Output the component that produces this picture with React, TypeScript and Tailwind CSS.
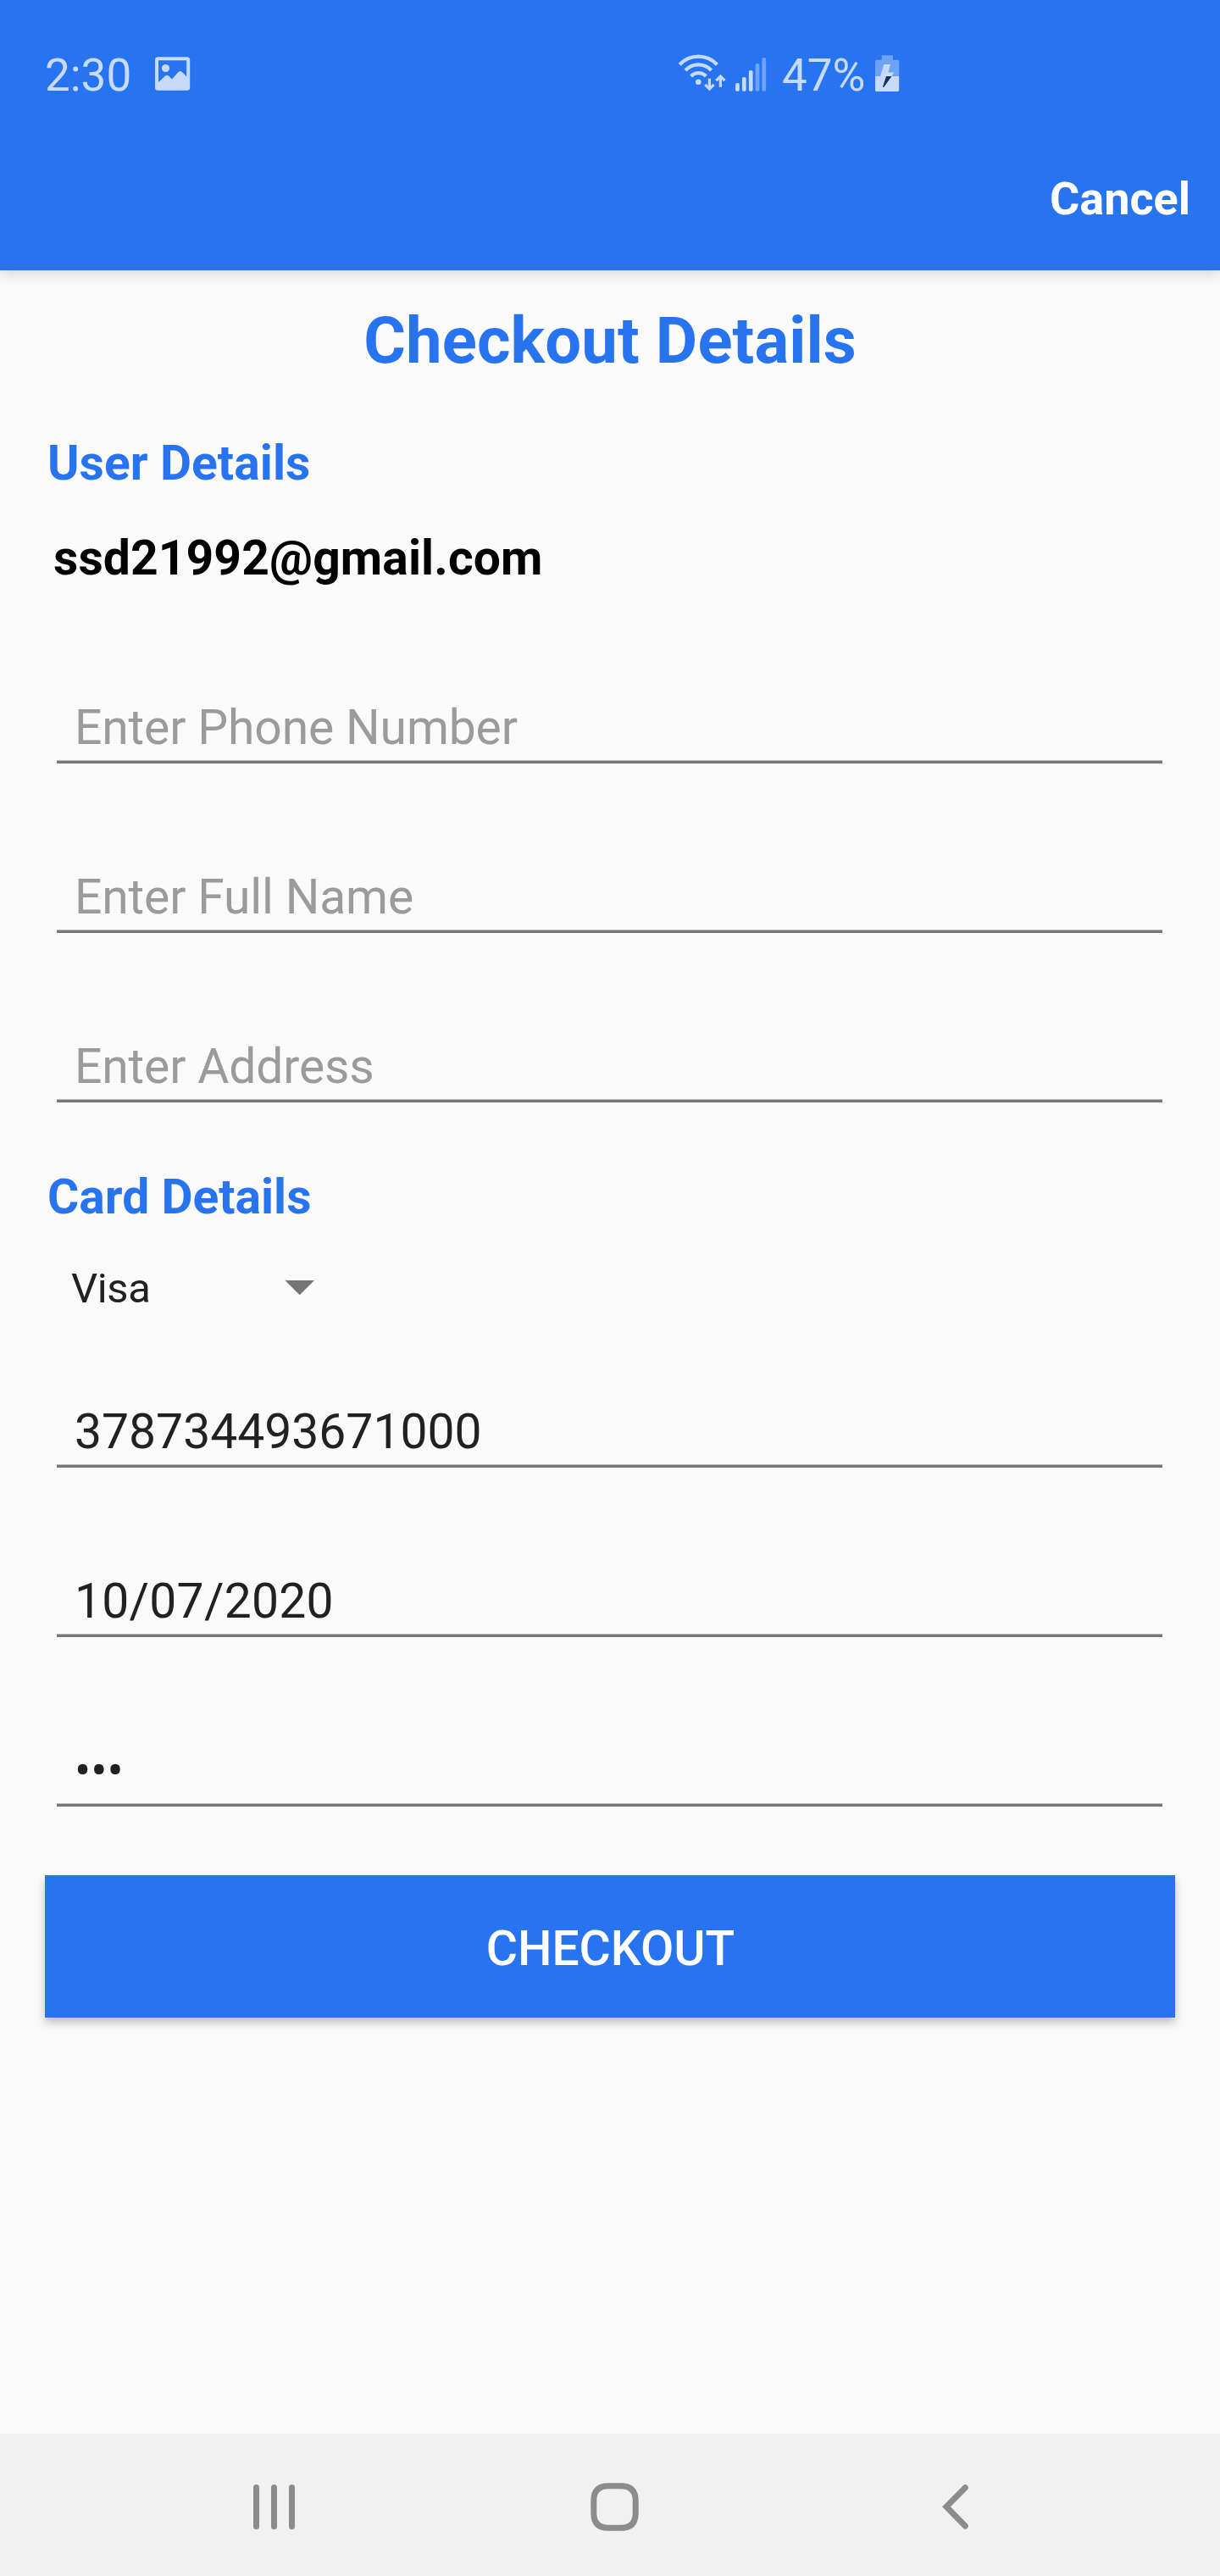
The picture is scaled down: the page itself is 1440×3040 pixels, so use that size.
import React from "react";

function PictureIcon() {
  return (
    <svg className="h-[60px] w-[42px]" viewBox="183 57 42 60" fill="none">
      <rect x="185" y="69.2" width="37.2" height="35.6" rx="1.5" stroke="#c6dbfc" strokeWidth="4" />
      <circle cx="195.5" cy="80.5" r="4.6" fill="#c6dbfc" />
      <path d="M186 98L194.5 90Q197 87.500 199.500 90L203 93.500L210 85.500Q212.500 82.500 215.500 85.500L221.500 91.500V105H186Z" fill="#c6dbfc" />
    </svg>
  );
}

function WifiIcon() {
  return (
    <svg className="h-[60px] w-[64px]" viewBox="0 0 64 60" fill="none" stroke="#c6dbfc">
      <path d="M7.200 21.200A30.200 30.200 0 0 1 51.400 21.200" strokeWidth="4.200" />
      <path d="M14 28A21 21 0 0 1 44.600 28" strokeWidth="4.200" />
      <path d="M20.700 35A11.800 11.800 0 0 1 38.300 35" strokeWidth="4.200" />
      <circle cx="29.300" cy="41.800" r="3.300" fill="#c6dbfc" stroke="none" />
      <path d="M42.400 37.800V49.500M37.300 44.800L42.400 50L47.500 44.800M55.400 47.800V36M50.300 40.200L55.400 35L60.500 40.200" strokeWidth="3.200" />
    </svg>
  );
}

function SignalIcon() {
  const bars = [
    { x: 75.4, top: 43, color: "#c6dbfc" },
    { x: 83.3, top: 36, color: "#c6dbfc" },
    { x: 91.2, top: 28, color: "#c6dbfc" },
    { x: 99, top: 20, color: "#6ea2f6" },
    { x: 106.8, top: 13, color: "#6ea2f6" },
  ];
  return (
    <svg className="h-[60px] w-[40px]" viewBox="72 0 40 60">
      {bars.map((b) => (
        <rect key={b.x} x={b.x - 2.35} y={b.top} width={4.7} height={52.8 - b.top} rx={1.8} fill={b.color} />
      ))}
    </svg>
  );
}

function BatteryIcon() {
  return (
    <svg className="h-[60px] w-[30px]" viewBox="1032 55 30 60">
      <path d="M1040.700 65.200H1054V70.800H1059.500Q1061.200 70.800 1061.200 72.500V90H1033V72.500Q1033 70.800 1034.700 70.800H1040.700Z" fill="#6ea2f6" />
      <path d="M1033 90H1061.200V106.200Q1061.200 107.900 1059.500 107.900H1034.700Q1033 107.900 1033 106.200Z" fill="#c6dbfc" />
      <path d="M1043.300 76H1051L1048.300 85.400H1055.300L1052.300 90H1039Z" fill="#c6dbfc" />
      <path d="M1046 90H1052.500L1043.500 102.500Q1042.300 103.600 1042 102.300Z" fill="#1c2f55" />
    </svg>
  );
}

function Field({ value, hint, tracking = "tracking-normal" }: { value?: string; hint?: string; tracking?: string }) {
  return (
    <div className="ml-[67px] w-[1305px]">
      <div
        className={`h-[72px] pl-[21px] text-[57px] leading-[67px] ${
          value ? `text-[#212121] ${tracking}` : "text-[#9b9b9b] tracking-[-0.15px]"
        }`}
      >
        {value ?? hint}
      </div>
      <div className="h-[4px] border-t border-[#b8b8b8] bg-[#767676]" />
    </div>
  );
}

export default function App() {
  return (
    <div className="flex h-[3040px] w-[1440px] flex-col overflow-hidden bg-[#fafafa] font-['Roboto',sans-serif]">
      <header className="h-[319px] shrink-0 bg-[#2874f0] pt-[55px] shadow-[0_4px_16px_rgba(0,0,0,0.15)]">
        <div className="flex h-[65px] items-start text-[53px] text-[#c6dbfc]">
          <span className="ml-[53px] w-[130px] pt-[3px] leading-[62px]">2:30</span>
          <div className="w-[612px] pt-[2px]">
            <PictureIcon />
          </div>
          <div className="w-[72px]">
            <WifiIcon />
          </div>
          <div className="w-[56px]">
            <SignalIcon />
          </div>
          <span className="w-[109px] pt-[3px] leading-[62px]">47%</span>
          <BatteryIcon />
        </div>
        <div className="mt-[83px] pr-[35px] text-right text-[54px] font-bold leading-[63px] text-white">Cancel</div>
      </header>

      <main className="flex flex-1 flex-col">
        <h1 className="mt-[38px] text-center text-[76px] font-bold leading-[90px] tracking-[0.12px] text-[#2874f0]">Checkout Details</h1>
        <h2 className="mt-[66px] ml-[56px] text-[57px] font-bold leading-[67px] tracking-[0.05px] text-[#2874f0]">User Details</h2>
        <p className="mt-[45px] ml-[63px] text-[57px] font-bold leading-[67px] tracking-[0.1px] text-black">ssd21992@gmail.com</p>
        <div className="mt-[133px] flex flex-col gap-[124px]">
          <Field hint="Enter Phone Number" />
          <Field hint="Enter Full Name" />
          <Field hint="Enter Address" />
        </div>

        <h2 className="mt-[78px] ml-[56px] text-[57px] font-bold leading-[67px] text-[#2874f0]">Card Details</h2>
        <div className="mt-[46px] ml-[84px] flex h-[57px] w-[287px] items-start justify-between text-[49px] leading-[57px] text-[#212121]">
          <span className="tracking-[-0.4px]">Visa</span>
          <svg className="mt-[19px] h-[18px] w-[35px]" viewBox="0 0 35 18">
            <path d="M0.500 0H35L17.700 17.300Z" fill="#757575" />
          </svg>
        </div>
        <div className="mt-[107px] flex flex-col gap-[124px]">
          <Field value="378734493671000" />
          <Field value="10/07/2020" tracking="tracking-[0.25px]" />
          <Field value="•••" />
        </div>

        <button className="mt-[81px] ml-[53px] block h-[168px] w-[1334px] bg-[#2874f0] pt-[53px] pb-[48px] pl-[1px] text-center text-[57px] font-medium leading-[67px] text-white shadow-[0_6px_10px_rgba(0,0,0,0.24)]">
          CHECKOUT
        </button>
      </main>

      <nav className="flex h-[168px] shrink-0 items-start bg-[#f1f1f1] pt-[56px]">
        <svg className="ml-[296px] h-[60px] w-[60px]" viewBox="296 2928 60 60" fill="#8c8c8c">
          <rect x="299" y="2932" width="7" height="53" rx="3.500" />
          <rect x="320" y="2932" width="7" height="53" rx="3.500" />
          <rect x="341" y="2932" width="7" height="53" rx="3.500" />
        </svg>
        <svg className="ml-[339px] h-[60px] w-[60px]" viewBox="695 2928 60 60" fill="none" stroke="#8c8c8c" strokeWidth="7">
          <path d="M718 2933.800H733Q750.200 2933.800 750.200 2951V2966Q750.200 2983.200 733 2983.200H718Q700.800 2983.200 700.800 2966V2951Q700.800 2933.800 718 2933.800Z" />
        </svg>
        <svg className="ml-[354px] h-[60px] w-[40px]" viewBox="1109 2928 40 60" fill="none" stroke="#8c8c8c" strokeWidth="7" strokeLinecap="round">
          <path d="M1139.300 2935.700L1117 2958.300L1139.300 2981" />
        </svg>
      </nav>
    </div>
  );
}
